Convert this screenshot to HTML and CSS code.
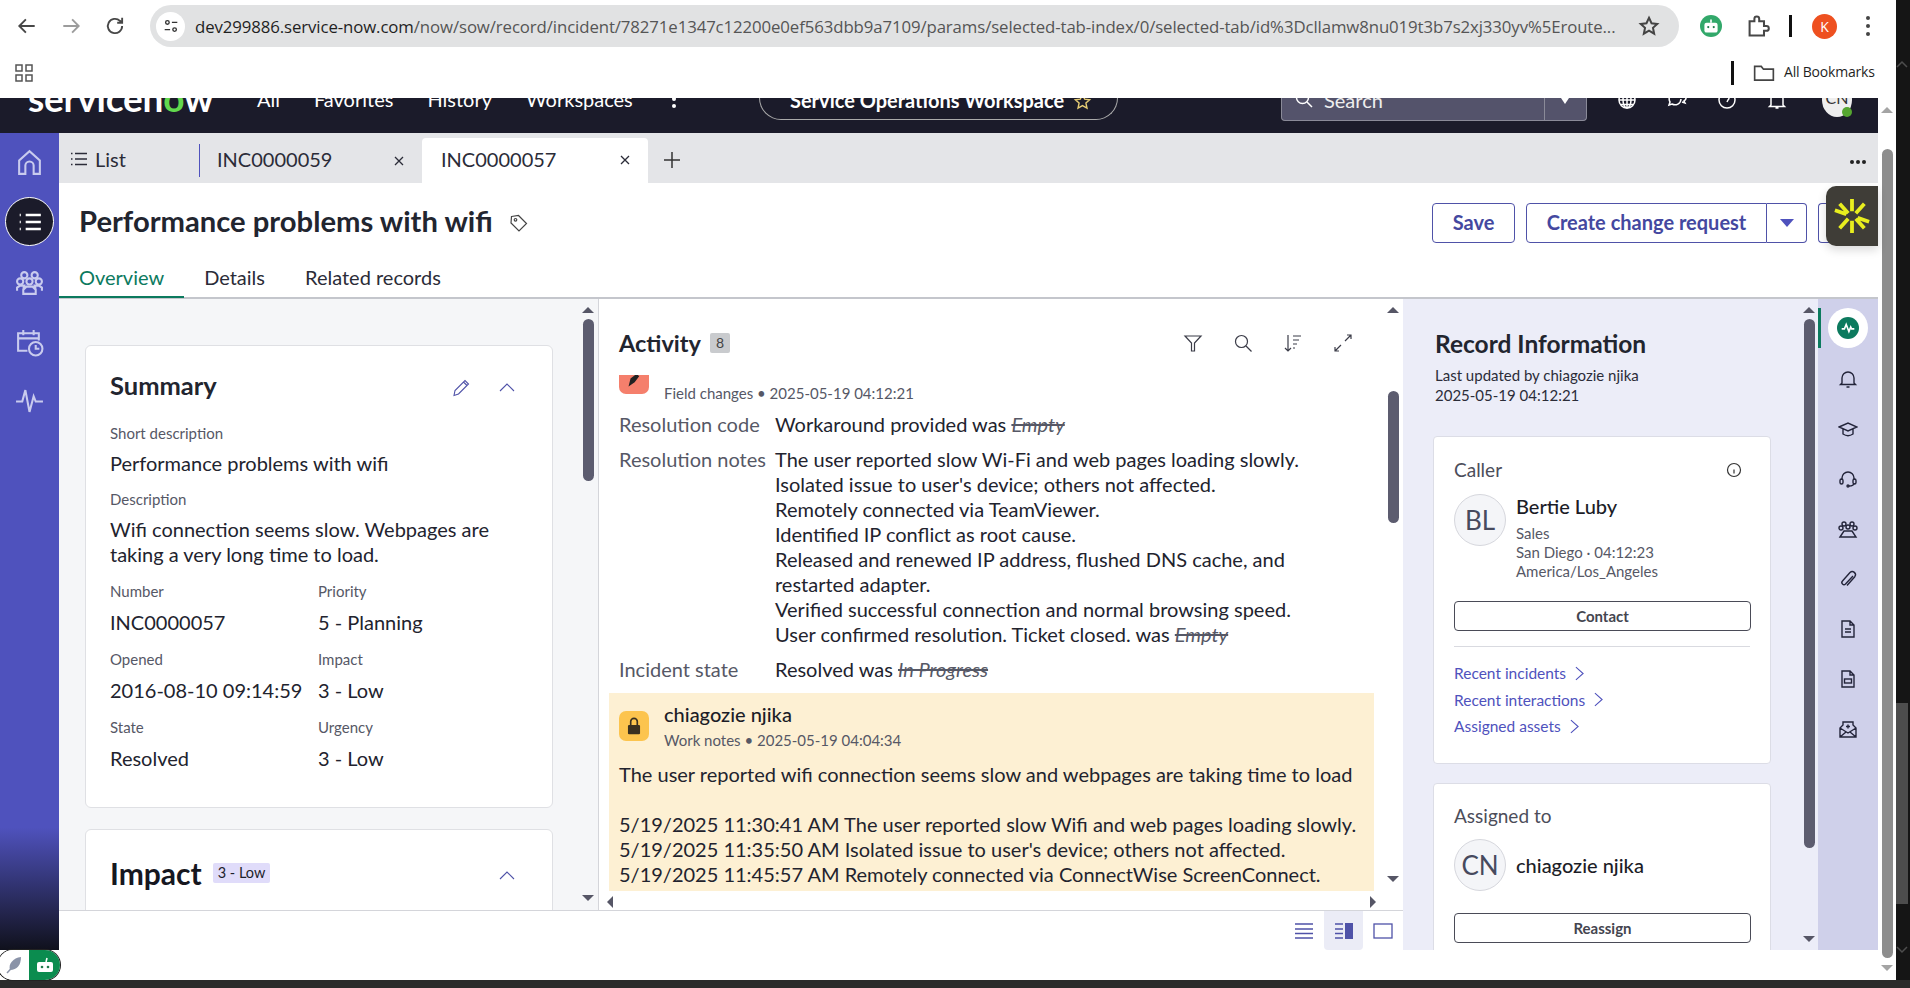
FILE: index.html
```html
<!DOCTYPE html>
<html>
<head>
<title>INC0000057</title>
<meta charset="utf-8" />
<link rel="stylesheet" href="styles.css">
</head>
<body>
<div class="window">

  <div class="chrome">
    <div class="toolbar">
      <svg class="tb-ico" viewBox="0 0 20 20"><path d="M17 10H3M9 4l-6 6 6 6"/></svg>
      <svg class="tb-ico faded" viewBox="0 0 20 20"><path d="M3 10h14M11 4l6 6-6 6"/></svg>
      <svg class="tb-ico" viewBox="0 0 20 20"><path d="M16.500 10a6.500 6.500 0 1 1-2-4.700L16.500 7M16.500 2.500V7H12"/></svg>
      <div class="omnibox">
        <span class="site-chip"><svg viewBox="0 0 20 20"><circle cx="6" cy="6" r="2"/><path d="M11 6h6M3 14h6"/><circle cx="14" cy="14" r="2"/></svg></span>
        <span class="url"><span class="url-host">dev299886.service-now.com</span>/now/sow/record/incident/78271e1347c12200e0ef563dbb9a7109/params/selected-tab-index/0/selected-tab/id%3Dcllamw8nu019t3b7s2xj330yv%5Eroute...</span>
        <svg class="star" viewBox="0 0 20 20"><path d="M10 2.500l2.300 5 5.200.6-3.900 3.500 1.100 5.400L10 14.300 5.300 17l1.100-5.400L2.500 8.100l5.200-.6z"/></svg>
      </div>
      <span class="ext-green"><svg viewBox="0 0 20 20"><rect x="4" y="7" width="12" height="9" rx="2"/><circle cx="7.500" cy="11" r="1" class="eye"/><circle cx="12.500" cy="11" r="1" class="eye"/><path d="M10 7V4" class="ant"/></svg></span>
      <svg class="tb-ico puzzle" viewBox="0 0 20 20"><path d="M3 6h4V4a2 2 0 0 1 4 0v2h4v4h2a2 2 0 0 1 0 4h-2v4H3z"/></svg>
      <span class="tb-sep"></span>
      <span class="profile">K</span>
      <span class="tb-kebab"><i></i><i></i><i></i></span>
    </div>
    <div class="bookmarks">
      <svg class="apps" viewBox="0 0 20 20"><rect x="2" y="2" width="6" height="6"/><rect x="12" y="2" width="6" height="6"/><rect x="2" y="12" width="6" height="6"/><rect x="12" y="12" width="6" height="6"/></svg>
      <span class="bm-sep"></span>
      <svg class="folder" viewBox="0 0 20 20"><path d="M1.500 4h6l2 2.500h9v10h-17z"/></svg>
      <span class="bm-label">All Bookmarks</span>
    </div>
  </div>

  <div class="page">
    <div class="content">

      <div class="nav">
        <div class="nav-inner">
          <span class="logo">servicen<b>o</b>w</span>
          <a class="nav-link">All</a>
          <a class="nav-link">Favorites</a>
          <a class="nav-link">History</a>
          <a class="nav-link">Workspaces</a>
          <span class="nav-kebab"><i></i><i></i><i></i></span>
          <div class="pill">Service Operations Workspace
            <svg viewBox="0 0 20 20"><path d="M10 2.500l2.300 5 5.200.6-3.900 3.500 1.100 5.400L10 14.300 5.300 17l1.100-5.400L2.500 8.100l5.200-.6z"/></svg>
          </div>
          <div class="search">
            <svg viewBox="0 0 20 20"><circle cx="8.500" cy="8.500" r="6"/><path d="M13 13l5 5"/></svg>
            <span class="search-text">Search</span>
            <span class="search-drop"></span>
          </div>
          <div class="nav-icons">
            <svg viewBox="0 0 20 20"><circle cx="10" cy="10" r="8"/><path d="M2 10h16M10 2v16M4 5.500h12M4 14.500h12"/><ellipse cx="10" cy="10" rx="4" ry="8"/></svg>
            <svg viewBox="0 0 20 20"><path d="M8 3a6 6 0 0 0-5 9l-1 3 3-1a6 6 0 0 0 9-5M11 8a4 4 0 1 1 6 3l1 2-3-1"/></svg>
            <svg viewBox="0 0 20 20"><circle cx="10" cy="10" r="8"/><path d="M8 8a2 2 0 1 1 3 2l-1 2M10 15v.1"/></svg>
            <svg viewBox="0 0 20 20"><path d="M4 15V9a6 6 0 0 1 12 0v6l1.500 1.500h-15zM8.500 18h3M10 2v1"/></svg>
          </div>
          <div class="nav-avatar">CN<span class="online"></span></div>
        </div>
      </div>

      <div class="main">
        <div class="rail">
          <svg class="rail-ico" viewBox="0 0 28 28"><path d="M4 25V12L14 3l10 9v13h-6v-8a4 4 0 0 0-8 0v8z"/></svg>
          <span class="rail-active"><svg viewBox="0 0 24 24"><path d="M8 5.500h14M8 12h14M8 18.500h14M2.500 5.500h1M2.500 12h1M2.500 18.500h1"/></svg></span>
          <svg class="rail-ico" viewBox="0 0 28 28"><circle cx="9" cy="7" r="3"/><circle cx="19" cy="7" r="3"/><circle cx="5" cy="13" r="3"/><circle cx="23" cy="13" r="3"/><circle cx="14" cy="13" r="3"/><path d="M2 22v-3l3-2h4l-1 3M26 22v-3l-3-2h-4l1 3M8 25v-4l3-3h6l3 3v4z"/></svg>
          <svg class="rail-ico" viewBox="0 0 28 28"><path d="M12 22H3V5h20v7M3 10h20M8 2v5M18 2v5"/><circle cx="20" cy="20" r="6.500"/><path d="M20 16.500V20h3.500"/></svg>
          <svg class="rail-ico rail-pulse" viewBox="0 0 28 28"><path d="M1 15h6l3-11 4 21 4-15 2 5h7"/></svg>
        </div>

        <div class="workspace">
          <div class="tabs">
            <div class="tab tab-list"><svg viewBox="0 0 16 14"><path d="M0 1.500h1.500M4 1.500h12M0 7h1.500M4 7h12M0 12.500h1.500M4 12.500h12"/></svg>List</div>
            <div class="tab tab-rec">INC0000059<svg class="tab-x" viewBox="0 0 10 10"><path d="M1 1l8 8M9 1l-8 8"/></svg></div>
            <div class="tab tab-rec tab-on">INC0000057<svg class="tab-x" viewBox="0 0 10 10"><path d="M1 1l8 8M9 1l-8 8"/></svg></div>
            <svg class="tab-plus" viewBox="0 0 18 18"><path d="M9 1v16M1 9h16"/></svg>
            <span class="tab-more"><i></i><i></i><i></i></span>
          </div>

          <div class="record-head">
            <div class="title-row">
              <h1 class="record-title">Performance problems with wifi</h1>
              <svg class="tag" viewBox="0 0 20 20"><path d="M2.500 3.500l7-1 8 8-7.500 7.500-8-8z"/><circle cx="6.500" cy="6.800" r="1.300"/></svg>
              <div class="actions">
                <button class="btn btn-save">Save</button>
                <div class="split">
                  <button class="btn btn-main">Create change request</button>
                  <button class="btn btn-caret"><span class="caret"></span></button>
                </div>
                <button class="btn btn-cut"></button>
              </div>
            </div>
            <div class="rec-tabs">
              <a class="rec-tab rec-tab-on">Overview</a>
              <a class="rec-tab">Details</a>
              <a class="rec-tab">Related records</a>
            </div>
          </div>

          <div class="panes">
            <div class="panes-main">
              <div class="panes-row">

                <div class="pane-left">
                  <div class="left-scroll">
                    <section class="card card-summary">
                      <div class="card-head">
                        <h2 class="card-title">Summary</h2>
                        <svg class="act-ico pencil" viewBox="0 0 20 20"><path d="M3 17.500l1-5L14 2.500l3.500 3.500L7.500 16zM12.500 4l3.500 3.500"/></svg>
                        <svg class="act-ico" viewBox="0 0 20 20"><path d="M3 14l7-7 7 7"/></svg>
                      </div>
                      <div class="field">
                        <div class="label">Short description</div>
                        <div class="value">Performance problems with wifi</div>
                      </div>
                      <div class="field">
                        <div class="label">Description</div>
                        <div class="value">Wifi connection seems slow. Webpages are taking a very long time to load.</div>
                      </div>
                      <div class="field-grid">
                        <div><div class="label">Number</div><div class="value">INC0000057</div></div>
                        <div><div class="label">Priority</div><div class="value">5 - Planning</div></div>
                        <div><div class="label">Opened</div><div class="value">2016-08-10 09:14:59</div></div>
                        <div><div class="label">Impact</div><div class="value">3 - Low</div></div>
                        <div><div class="label">State</div><div class="value">Resolved</div></div>
                        <div><div class="label">Urgency</div><div class="value">3 - Low</div></div>
                      </div>
                    </section>
                    <section class="card card-impact">
                      <div class="card-head">
                        <h2 class="card-title-lg">Impact</h2>
                        <span class="impact-badge">3 - Low</span>
                        <svg class="act-ico" viewBox="0 0 20 20"><path d="M3 14l7-7 7 7"/></svg>
                      </div>
                    </section>
                  </div>
                  <div class="vbar"><span class="up"></span><span class="thumb thumb-left"></span><span class="down"></span></div>
                </div>

                <div class="pane-mid">
                  <div class="mid-col">
                    <div class="activity-head">
                      <h2 class="activity-title">Activity</h2>
                      <span class="count">8</span>
                      <div class="activity-tools">
                        <svg viewBox="0 0 20 20"><path d="M2 3h16l-6.500 7v8h-3v-8z"/></svg>
                        <svg viewBox="0 0 20 20"><circle cx="8.500" cy="8.500" r="6"/><path d="M13 13l5.500 5.500"/></svg>
                        <svg viewBox="0 0 20 20"><path d="M5 2v16M2 15l3 3 3-3M10 3h8M10 7h6M10 11h4M10 15h2"/></svg>
                        <svg viewBox="0 0 20 20"><path d="M12 8l6-6M14 2h4v4M8 12l-6 6M2 14v4h4"/></svg>
                      </div>
                    </div>
                    <div class="feed">
                      <div class="entry entry-changes">
                        <div class="entry-head">
                          <span class="entry-ico ico-pink"><svg viewBox="0 0 20 20"><path d="M7 14l1-4 4-3 1 1-3 4z"/></svg></span>
                          <div><div class="entry-name">&nbsp;</div><div class="entry-meta">Field changes &bull; 2025-05-19 04:12:21</div></div>
                        </div>
                        <div class="change"><span class="change-k">Resolution code</span><span class="change-v">Workaround provided was <s>Empty</s></span></div>
                        <div class="change"><span class="change-k">Resolution notes</span><span class="change-v">The user reported slow Wi-Fi and web pages loading slowly.<br>Isolated issue to user's device; others not affected.<br>Remotely connected via TeamViewer.<br>Identified IP conflict as root cause.<br>Released and renewed IP address, flushed DNS cache, and restarted adapter.<br>Verified successful connection and normal browsing speed.<br>User confirmed resolution. Ticket closed. was <s>Empty</s></span></div>
                        <div class="change"><span class="change-k">Incident state</span><span class="change-v">Resolved was <s>In Progress</s></span></div>
                      </div>
                      <div class="entry entry-note">
                        <div class="entry-head">
                          <span class="entry-ico ico-amber"><svg viewBox="0 0 20 20"><rect x="4.500" y="9" width="11" height="8.500" rx="1" class="lock-body"/><path d="M7 9V6a3 3 0 0 1 6 0v3" class="lock-arc"/></svg></span>
                          <div><div class="entry-name">chiagozie njika</div><div class="entry-meta">Work notes &bull; 2025-05-19 04:04:34</div></div>
                        </div>
                        <div class="note-text">The user reported wifi connection seems slow and webpages are taking time to load<br><br>5/19/2025 11:30:41 AM The user reported slow Wifi and web pages loading slowly.<br>5/19/2025 11:35:50 AM Isolated issue to user's device; others not affected.<br>5/19/2025 11:45:57 AM Remotely connected via ConnectWise ScreenConnect.</div>
                      </div>
                    </div>
                    <div class="hbar"><span class="left"></span><span class="right"></span></div>
                  </div>
                  <div class="vbar vbar-mid"><span class="up"></span><span class="thumb thumb-mid"></span><span class="down"></span></div>
                </div>

              </div>

              <div class="view-bar">
                <svg viewBox="0 0 20 20"><path d="M1 3h18M1 8h18M1 12.500h18M1 17h18"/></svg>
                <span class="view-on"><svg viewBox="0 0 20 20"><path d="M1 3h8M1 8h8M1 12.500h8M1 17h8"/><rect x="11" y="2" width="8" height="16" class="solid"/></svg></span>
                <svg viewBox="0 0 20 20"><rect x="1" y="3" width="18" height="14"/></svg>
              </div>
            </div>

            <div class="pane-right">
              <div class="right-scroll">
                <h2 class="record-info">Record Information</h2>
                <div class="updated">Last updated by chiagozie njika<br>2025-05-19 04:12:21</div>
                <section class="info-card">
                  <div class="info-head">Caller
                    <svg viewBox="0 0 16 16"><circle cx="8" cy="8" r="6.500"/><path d="M8 7.500v4M8 4.500v.1"/></svg>
                  </div>
                  <div class="person">
                    <span class="avatar">BL</span>
                    <div>
                      <div class="person-name">Bertie Luby</div>
                      <div class="person-sub">Sales<br>San Diego &middot; 04:12:23<br>America/Los_Angeles</div>
                    </div>
                  </div>
                  <button class="wide-btn">Contact</button>
                  <div class="info-rule"></div>
                  <a class="info-link">Recent incidents<svg viewBox="0 0 10 16"><path d="M1 1l8 7-8 7"/></svg></a>
                  <a class="info-link">Recent interactions<svg viewBox="0 0 10 16"><path d="M1 1l8 7-8 7"/></svg></a>
                  <a class="info-link">Assigned assets<svg viewBox="0 0 10 16"><path d="M1 1l8 7-8 7"/></svg></a>
                </section>
                <section class="info-card info-card-2">
                  <div class="info-head">Assigned to</div>
                  <div class="person person-one">
                    <span class="avatar">CN</span>
                    <div class="person-name">chiagozie njika</div>
                  </div>
                  <button class="wide-btn wide-btn-2">Reassign</button>
                </section>
              </div>
              <div class="vbar vbar-right"><span class="up"></span><span class="thumb thumb-right"></span><span class="down"></span></div>
              <div class="side-strip">
                <span class="side-on"><span class="side-dot"><svg viewBox="0 0 20 20"><path d="M3 11h3l2-5 3 8 2-5 1 2h3"/></svg></span></span>
                <svg viewBox="0 0 20 20"><path d="M4 14V9a6 6 0 0 1 12 0v5l1.500 1.500h-15zM8.500 18h3"/></svg>
                <svg viewBox="0 0 20 20"><path d="M1 8l9-4 9 4-9 4zM5 10v5c3 2 7 2 10 0v-5"/></svg>
                <svg viewBox="0 0 20 20"><path d="M4 11V9a6 6 0 0 1 12 0v2M16 14c0 2-2 3-5 3"/><rect x="2" y="10" width="3" height="5" rx="1.500"/><rect x="15" y="10" width="3" height="5" rx="1.500"/><circle cx="10" cy="17" r="1"/></svg>
                <svg viewBox="0 0 20 20"><circle cx="6" cy="5" r="2"/><circle cx="14" cy="5" r="2"/><circle cx="3" cy="9" r="2"/><circle cx="17" cy="9" r="2"/><circle cx="10" cy="8" r="2"/><path d="M2 18l4-6h8l4 6z"/></svg>
                <svg viewBox="0 0 20 20"><path d="M15 7l-7.500 8a2 2 0 0 1-3-3L12 3.500a3.200 3.200 0 0 1 4.800 4.200L9 16.500"/></svg>
                <svg viewBox="0 0 20 20"><path d="M4 2h8l4 4v12H4zM12 2v4h4M7 10h6M7 13h6"/></svg>
                <svg viewBox="0 0 20 20"><path d="M4 2h8l4 4v12H4zM12 2v4h4"/><rect x="6.500" y="10" width="7" height="4"/></svg>
                <svg viewBox="0 0 20 20"><path d="M2 9l3-3V3h10v3l3 3v9H2zM2 9l8 5 8-5M2 18l6-5M18 18l-6-5M10 5.500v4M8 7.500h4"/></svg>
              </div>
            </div>
          </div>
        </div>
      </div>

      <div class="widget"><svg viewBox="0 0 40 40"><path d="M20 2v13M20 25v13M2 14l12 4M26 22l12 4M7 33l9-10M24 17l9-10M7 7l9 10M24 23l9 10"/></svg></div>
      <div class="corner-pill">
        <span class="pill-left"><svg viewBox="0 0 20 20"><path d="M3 18L15 5"/><path class="feather" d="M6 15c-2-6 3-12 11-13 0 8-4 13-11 13z"/></svg></span>
        <span class="pill-right"><svg viewBox="0 0 20 20"><rect x="2" y="7" width="16" height="10" rx="2"/><circle cx="7" cy="12" r="1.300" class="eye"/><circle cx="13" cy="12" r="1.300" class="eye"/><path d="M11 7l1-4" class="ant"/></svg></span>
      </div>
    </div>

    <div class="page-scroll"><span class="up"></span><span class="thumb thumb-page"></span><span class="down"></span></div>
  </div>
</div>
<div class="desk-edge">
  <svg viewBox="0 0 12 8"><path d="M1 7l5-5 5 5"/></svg>
  <span class="desk-thumb"></span>
  <svg class="desk-down" viewBox="0 0 12 8"><path d="M1 1l5 5 5-5"/></svg>
</div>
</body>
</html>
```

FILE: styles.css
```css
* { box-sizing: border-box; }

html, body { margin: 0; padding: 0; }

body {
  width: 1910px;
  height: 988px;
  overflow: hidden;
  display: flex;
  align-items: flex-start;
  background: #2b2b2b;
  font-family: 'Lato', sans-serif;
  color: #1e1f2b;
}

h1, h2 { margin: 0; }

svg { fill: none; stroke: currentColor; stroke-width: 1.5; flex: none; }

button { font-family: inherit; background: #fff; cursor: pointer; }

.window {
  width: 1896px;
  height: 980px;
  flex: none;
  display: flex;
  flex-direction: column;
  background: #fff;
}

.desk-edge {
  width: 14px;
  height: 980px;
  background: #151515;
  display: flex;
  flex-direction: column;
  padding: 60px 2px 0 0;
  color: #4d4d4d;
}

.desk-edge svg { width: 12px; height: 8px; }
.desk-thumb { height: 201px; margin-top: 635px; background: #4d4d4d; flex: none; }
.desk-down { margin-top: 42px; }

/* browser chrome */
.chrome { height: 98px; font-family: 'Open Sans', sans-serif; flex: none; }

.toolbar { height: 47px; padding-top: 5px; display: flex; align-items: center; }

.tb-ico { width: 22px; height: 22px; margin-left: 16px; margin-right: 6px; color: #474747; stroke-width: 1.7; }
.tb-ico.faded { color: #9c9c9c; margin-left: 16px; }
.tb-ico:first-child { margin-left: 16px; }

.omnibox {
  width: 1529px;
  height: 42px;
  margin-left: 18px;
  border-radius: 21px;
  background: #e1e2e3;
  display: flex;
  align-items: center;
  padding-left: 6px;
}

.site-chip {
  width: 29px;
  height: 29px;
  border-radius: 50%;
  background: #fff;
  display: flex;
  align-items: center;
  justify-content: center;
  color: #333;
}

.site-chip svg { width: 18px; height: 18px; }

.url { margin-left: 10px; width: 1424px; white-space: nowrap; overflow: hidden; font-size: 16.800px; color: #555; letter-spacing: -.1px; }
.url-host { color: #1f1f1f; }

.star { width: 22px; height: 22px; margin-left: 19px; color: #444; stroke-width: 1.800; }

.ext-green {
  width: 22px;
  height: 22px;
  border-radius: 50%;
  background: #32a86a;
  margin-left: 21px;
  color: #fff;
  display: flex;
}

.ext-green svg { width: 22px; height: 22px; }
.ext-green rect { fill: #fff; stroke: none; }
.eye { fill: #1f7a4a; stroke: none; }
.ant { stroke: #fff; }

.tb-ico.puzzle { margin-left: 24px; margin-right: 0; width: 24px; height: 24px; }

.tb-sep { width: 3px; height: 22px; background: #111; margin-left: 19px; }

.profile {
  width: 25px;
  height: 25px;
  margin-left: 20px;
  border-radius: 50%;
  background: #ee5020;
  color: #fff;
  font-size: 14px;
  display: flex;
  align-items: center;
  justify-content: center;
}

.tb-kebab { display: flex; flex-direction: column; gap: 4px; margin-left: 29px; }
.tb-kebab i { width: 4px; height: 4px; border-radius: 50%; background: #444; }

.bookmarks { height: 51px; display: flex; align-items: center; padding-left: 14px; }

.apps { width: 20px; height: 20px; color: #555; }

.bm-sep { width: 3px; height: 24px; background: #111; margin-left: 1697px; }

.folder { width: 22px; height: 22px; margin-left: 19px; color: #444; }

.bm-label { margin: -2px 0 0 9px; font-size: 14px; letter-spacing: -.2px; color: #1f1f1f; white-space: nowrap; }

/* page */
.page { flex: 1; display: flex; min-height: 0; }

.content { width: 1878px; position: relative; display: flex; flex-direction: column; }

.nav { height: 35px; background: #1b1b2a; overflow: hidden; flex: none; }

.nav-inner { height: 72px; margin-top: -35px; display: flex; align-items: center; color: #fff; position: relative; }

.logo { width: 257px; padding-left: 28px; margin-top: -4px; font-size: 37px; font-weight: 700; letter-spacing: -.2px; line-height: 1; flex: none; }
.logo b { color: #62d84e; font-weight: 700; }

.nav-link { font-size: 20px; margin-right: 34px; white-space: nowrap; }

.nav-kebab { display: flex; flex-direction: column; gap: 3px; margin-left: 5px; }
.nav-kebab i { width: 4px; height: 4px; border-radius: 50%; background: #fff; }

.pill {
  position: absolute;
  left: 759px;
  top: 0;
  width: 359px;
  height: 57px;
  padding: 25px 0 0 30px;
  border: 1px solid #aaa;
  border-top: 0;
  border-radius: 0 0 22px 22px;
  font-size: 20px;
  line-height: 24px;
  font-weight: 700;
  white-space: nowrap;
  display: flex;
  gap: 9px;
}

.pill svg { width: 19px; height: 19px; margin-top: 4px; color: #e6cc74; }

.search {
  position: absolute;
  left: 1281px;
  top: 0;
  width: 306px;
  height: 58px;
  padding: 26px 0 0 12px;
  background: #54536b;
  border: 1px solid #8a8a98;
  border-top: 0;
  border-radius: 0 0 4px 4px;
  display: flex;
  gap: 10px;
}

.search svg { width: 20px; height: 20px; }
.search-text { font-size: 20px; line-height: 22px; color: #eee; }

.search-drop {
  position: absolute;
  right: 0;
  top: 0;
  bottom: 0;
  width: 42px;
  border-left: 1px solid #8a8a98;
}

.search-drop:after {
  content: '';
  position: absolute;
  left: 14px;
  top: 32px;
  border-left: 6px solid transparent;
  border-right: 6px solid transparent;
  border-top: 9px solid #fff;
}

.nav-icons { position: absolute; left: 1617px; top: 27px; display: flex; gap: 30px; }
.nav-icons svg { width: 20px; height: 20px; }

.nav-avatar {
  position: absolute;
  left: 1822px;
  top: 20px;
  width: 30px;
  height: 34px;
  border-radius: 50%;
  background: #eee;
  color: #333;
  font-size: 16px;
  text-align: center;
  line-height: 30px;
}

.online {
  position: absolute;
  right: 0;
  bottom: 0;
  width: 10px;
  height: 10px;
  border-radius: 50%;
  background: #55a630;
}

.main { height: 817px; display: flex; flex: none; }

/* left rail */
.rail {
  width: 59px;
  flex: none;
  background: linear-gradient(#4f52bd 0, #4f52bd 85%, #10111c 100%);
  display: flex;
  flex-direction: column;
  align-items: center;
  padding-top: 15px;
}

.rail-ico { width: 29px; height: 29px; color: #c9cbee; stroke-width: 2; margin-bottom: 31px; }
.rail-pulse { margin-top: -2px; }

.rail-active {
  width: 49px;
  height: 49px;
  margin: -11px 0 22px;
  border-radius: 50%;
  background: #1b1b2a;
  border: 1px solid #fff;
  display: flex;
  align-items: center;
  justify-content: center;
  color: #fff;
}

.rail-active svg { width: 26px; height: 26px; stroke-width: 2.400; }

.workspace { flex: 1; min-width: 0; display: flex; flex-direction: column; }

/* tabs */
.tabs { height: 50px; background: #e4e5e8; display: flex; align-items: flex-end; flex: none; padding-right: 12px; }

.tab { height: 45px; display: flex; align-items: center; font-size: 20px; color: #2b2c38; flex: none; padding-bottom: 4px; }

.tab-list { width: 140px; padding-left: 12px; position: relative; }
.tab-list svg { width: 16px; height: 14px; margin-right: 8px; stroke-width: 1.300; }

.tab-rec { width: 223px; padding: 0 18px 3px 17px; justify-content: space-between; border-left: 1px solid #4f52bd; height: 33px; margin-bottom: 6px; }

.tab-on { width: 226px; height: 45px; margin: 0; padding: 0 18px 4px 19px; background: #fff; border: 0; border-radius: 4px 4px 0 0; }

.tab-x { width: 10px; height: 10px; stroke-width: 1.300; margin-top: 3px; }

.tab-plus { width: 18px; height: 18px; margin: 0 0 14px 15px; color: #333; stroke-width: 1.500; }

.tab-more { margin: 0 0 19px auto; display: flex; gap: 2px; }
.tab-more i { width: 4px; height: 4px; border-radius: 50%; background: #222; }

/* record head */
.record-head { height: 115px; flex: none; position: relative; }

.title-row { height: 80px; display: flex; align-items: center; padding-left: 20px; }

.record-title { font-size: 29.200px; font-weight: 700; color: #22252f; white-space: nowrap; line-height: 1; margin-bottom: 5px; }

.tag { width: 20px; height: 20px; margin-left: 16px; color: #444; stroke-width: 1.200; }

.actions { margin-left: auto; display: flex; gap: 11px; }

.btn {
  height: 40px;
  border: 1px solid #4f52a8;
  border-radius: 4px;
  color: #4448a0;
  font-size: 20px;
  font-weight: 700;
  padding: 0 21px 2px;
}

.btn-save { width: 83px; padding: 0 0 2px; }

.split { display: flex; }
.btn-main { border-radius: 4px 0 0 4px; width: 241px; padding: 0 0 2px; }
.btn-caret { border-radius: 0 4px 4px 0; border-left: 0; width: 40px; padding: 0; display: flex; align-items: center; justify-content: center; }
.btn-cut { width: 60px; padding: 0; border-right: 0; border-radius: 4px 0 0 4px; }

.caret { display: block; border-left: 7px solid transparent; border-right: 7px solid transparent; border-top: 8px solid #4f52bd; }

.rec-tabs { height: 35px; display: flex; padding-left: 20px; gap: 40px; }

.rec-tab { font-size: 20px; line-height: 28px; color: #2b2c38; position: relative; }

.rec-tab-on { color: #0c7a5e; }

.rec-tab-on:after {
  content: '';
  position: absolute;
  left: -20px;
  right: -20px;
  top: 33px;
  height: 2px;
  background: #0c7a5e;
}

/* panes */
.panes { flex: 1; min-height: 0; display: flex; border-top: 2px solid #c4c6cc; margin-top: -1px; }

.panes-main { width: 1344px; flex: none; display: flex; flex-direction: column; }

.panes-row { height: 611px; flex: none; display: flex; }

.vbar {
  width: 12px;
  flex: none;
  display: flex;
  flex-direction: column;
  align-items: center;
}

.up, .down { width: 0; height: 0; border-left: 6px solid transparent; border-right: 6px solid transparent; }
.up { border-bottom: 6px solid #565666; margin-top: 8px; }
.down { border-top: 6px solid #565666; margin-top: auto; margin-bottom: 9px; }

.thumb { width: 11px; border-radius: 6px; background: #5c5c6f; margin-top: 6px; flex: none; }

.thumb-left { height: 162px; }
.thumb-mid { height: 132px; margin-top: 78px; }
.thumb-right { height: 529px; }

.vbar-mid .down { margin-bottom: 28px; }
.vbar-right .down { margin-bottom: 8px; }

.pane-left { width: 539px; flex: none; background: #f5f6f8; display: flex; padding-right: 4px; }

.left-scroll { flex: 1; min-width: 0; overflow: hidden; padding: 46px 0 0 26px; }

.card {
  width: 468px;
  background: #fff;
  border: 1px solid #dfe0e4;
  border-radius: 6px;
  padding: 24px 24px 0;
}

.card-summary { height: 463px; }
.card-impact { margin-top: 21px; height: 140px; padding-top: 28px; }

.card-head { display: flex; align-items: center; height: 30px; }

.card-title { font-size: 25.500px; font-weight: 700; line-height: 30px; color: #22252f; }
.card-title-lg { font-size: 30px; font-weight: 700; line-height: 30px; color: #16171f; }

.impact-badge { margin-left: 11px; padding: 0 5px; height: 20px; line-height: 20px; font-size: 14.500px; background: #e0dcfa; border-radius: 2px; }

.act-ico { width: 20px; height: 20px; margin: 4px 11px 0 auto; color: #4f52a8; stroke-width: 1.100; }
.pencil { margin-right: 0; margin-top: 5px; }
.pencil + .act-ico { margin-left: 26px; }

.field { margin-top: 13px; }
.card-head + .field { margin-top: 23px; }

.label { font-size: 15px; line-height: 20px; color: #565866; }
.value { font-size: 20px; line-height: 25px; margin-top: 8px; color: #22232e; }

.field-grid { display: grid; grid-template-columns: 208px 1fr; row-gap: 14px; margin-top: 14px; white-space: nowrap; }
.field-grid .value { margin-top: 9px; }

/* activity */
.pane-mid { width: 805px; flex: none; display: flex; border-left: 1px solid #d4d5da; background: #fff; padding-right: 4px; }

.mid-col { flex: 1; min-width: 0; display: flex; flex-direction: column; }

.activity-head { height: 76px; flex: none; display: flex; align-items: center; padding-left: 20px; padding-top: 12px; }

.activity-title { font-size: 23.500px; font-weight: 700; color: #22252f; line-height: 30px; white-space: nowrap; }

.record-info { font-size: 24.500px; font-weight: 700; color: #22252f; line-height: 30px; white-space: nowrap; }

.count { width: 20px; height: 20px; margin-left: 9px; background: #c9cbce; border-radius: 2px; font-size: 14px; line-height: 20px; text-align: center; color: #444; }

.activity-tools { margin-left: auto; margin-right: 34px; display: flex; gap: 30px; color: #3b3c48; }
.activity-tools svg { width: 20px; height: 20px; stroke-width: 1.200; }

.feed { flex: 1; min-height: 0; overflow: hidden; padding-left: 10px; width: 775px; }

.entry-changes { margin-top: -19px; padding: 0 10px; height: 337px; }

.entry-head { display: flex; gap: 15px; }

.entry-ico { width: 30px; height: 30px; border-radius: 7px; margin-top: 8px; flex: none; display: flex; align-items: center; justify-content: center; }

.ico-pink { background: #f57f6c; color: #222; }
.ico-pink svg { width: 26px; height: 26px; fill: #222; }

.ico-amber { background: #fcc44e; color: #3a3020; }
.ico-amber svg { width: 22px; height: 22px; }
.lock-body { fill: #3a3020; stroke: none; }

.entry-name { font-size: 20px; line-height: 25px; font-weight: 500; color: #1c1d27; margin-top: -1px; }
.entry-meta { font-size: 15px; line-height: 20px; margin-top: 3px; color: #565866; }

.change { display: flex; margin-top: 10px; font-size: 20px; line-height: 25px; }
.entry-head + .change { margin-top: 9px; }

.change-k { width: 156px; flex: none; color: #565866; white-space: nowrap; }
.change-v { width: 560px; color: #22232e; }
.change-v s { color: #565866; font-style: italic; }

.entry-note { background: #fdf0d3; padding: 10px 10px 0; height: 198px; margin-top: 0; }

.note-text { font-size: 20px; line-height: 25px; margin-top: 12px; color: #22232e; white-space: nowrap; }

.hbar { height: 19px; flex: none; display: flex; justify-content: space-between; align-items: center; padding: 2px 0 0 8px; width: 777px; }

.left, .right { width: 0; height: 0; border-top: 6px solid transparent; border-bottom: 6px solid transparent; }
.left { border-right: 6px solid #565666; }
.right { border-left: 6px solid #565666; }

/* record information */
.pane-right { flex: 1; min-width: 0; background: #ecedf8; display: flex; overflow: hidden; }

.right-scroll { width: 400px; flex: none; padding: 30px 0 0 32px; overflow: hidden; }

.updated { font-size: 15px; line-height: 20px; margin-top: 6px; color: #2b2c38; }

.info-card {
  width: 338px;
  height: 328px;
  margin: 31px 0 0 -2px;
  padding: 20px 20px 0;
  background: #fff;
  border: 1px solid #dcdde6;
  border-radius: 4px;
}

.info-card-2 { margin-top: 19px; height: 200px; padding-top: 19px; }

.info-head { display: flex; justify-content: space-between; align-items: center; font-size: 19px; line-height: 25px; color: #4c4d5a; }
.info-head svg { width: 16px; height: 16px; margin-right: 8px; stroke-width: 1.200; color: #333; }

.person { display: flex; gap: 10px; margin-top: 12px; }
.person-one { align-items: center; margin-top: 11px; }

.avatar {
  width: 52px;
  height: 52px;
  flex: none;
  border-radius: 50%;
  background: #f4f5f8;
  border: 1px solid #d6d7dd;
  display: flex;
  align-items: center;
  justify-content: center;
  font-size: 26px;
  color: #474a5e;
}

.person-name { font-size: 20px; line-height: 25px; font-weight: 500; color: #1c1d27; }
.person-sub { font-size: 15px; line-height: 19px; margin-top: 5px; color: #565866; }

.wide-btn {
  display: block;
  width: 297px;
  height: 30px;
  margin-top: 20px;
  border: 1px solid #4a4b57;
  border-radius: 4px;
  font-size: 15px;
  font-weight: 700;
  color: #44454f;
}

.wide-btn-2 { margin-top: 22px; }

.info-rule { height: 1px; margin: 15px 0 13px; background: #d9dae0; }

.info-link { display: flex; align-items: center; gap: 9px; height: 26.500px; font-size: 15.500px; color: #4f52bd; }
.info-link svg { width: 9px; height: 15px; stroke-width: 1.200; }

.side-strip {
  width: 60px;
  flex: none;
  margin-left: 3px;
  background: #cfd0ea;
  display: flex;
  flex-direction: column;
  align-items: center;
  padding-top: 9px;
  gap: 30px;
  color: #23243a;
}

.side-strip > svg { width: 20px; height: 20px; flex: none; stroke-width: 1.400; }

.side-on { width: 60px; height: 40px; margin-bottom: -9px; border-left: 3px solid #0c7a5e; padding-left: 7px; display: flex; flex: none; }

.side-dot { width: 40px; height: 40px; border-radius: 50%; background: #fff; display: flex; align-items: center; justify-content: center; }
.side-dot svg { width: 22px; height: 22px; background: #0c7a5e; border-radius: 50%; color: #fff; padding: 2px; stroke-width: 1.800; }

/* view switcher */
.view-bar { height: 40px; flex: none; display: flex; align-items: center; justify-content: flex-end; padding-right: 10px; gap: 10px; color: #4f52a8; border-top: 1px solid #d4d5da; }
.view-bar svg { width: 20px; height: 20px; stroke-width: 1.300; }

.view-on { width: 39px; height: 39px; background: #ebecf6; border-radius: 0 0 4px 4px; display: flex; align-items: center; justify-content: center; }
.view-on .solid { fill: #4f52a8; stroke: none; }

/* overlays */
.widget {
  position: absolute;
  left: 1826px;
  top: 88px;
  width: 52px;
  height: 60px;
  background: #3f3d37;
  border-radius: 10px 0 0 10px;
  box-shadow: 0 4px 10px rgba(0,0,0,.15);
  display: flex;
  align-items: center;
  justify-content: center;
}

.widget svg { width: 38px; height: 38px; color: #e8ee1e; stroke-width: 4; }

.corner-pill {
  position: absolute;
  left: -2px;
  bottom: 0;
  width: 62px;
  height: 30px;
  display: flex;
  border-radius: 15px;
  overflow: hidden;
  box-shadow: 0 0 0 1px #222;
}

.pill-left { width: 31px; background: #fff; color: #8a93a8; display: flex; align-items: center; justify-content: center; }
.pill-right { flex: 1; background: #0b8c4f; color: #fff; display: flex; align-items: center; justify-content: center; }
.pill-left svg, .pill-right svg { width: 20px; height: 20px; }
.feather { fill: #8a93a8; stroke: none; }
.pill-right rect { fill: #fff; stroke: none; }

.page-scroll {
  width: 18px;
  flex: none;
  display: flex;
  flex-direction: column;
  align-items: center;
}

.page-scroll .up { border-bottom-color: #a4a4a4; margin-top: 9px; }
.page-scroll .down { border-top-color: #a4a4a4; margin-bottom: 9px; }
.thumb-page { height: 809px; background: #8d8d8d; margin-top: 36px; }
```
